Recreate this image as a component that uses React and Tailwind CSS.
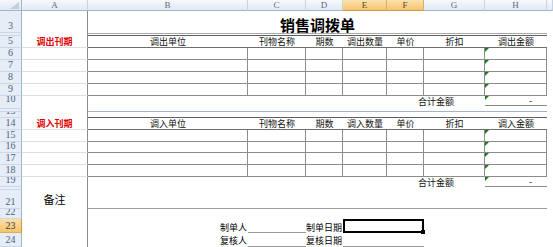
import React from "react";

// spreadsheet columns: row header, A..H, then a sliver of I
const GRID = "grid grid-cols-[22px_66px_160px_58px_37px_44px_37px_61px_62px_1fr]";
const LINE = "border-[#8c8c8c]";

const GreenTri = () => (
  <svg className="absolute left-0 top-0" width="4" height="4" viewBox="0 0 4 4">
    <polygon points="0,0 4,0 0,4" fill="#1f7a1f" />
  </svg>
);

const Row = ({ n, h, active, children }) => (
  <div className={`${GRID} ${h}`}>
    <div
      className={`flex items-end justify-center overflow-hidden border-r border-b font-['Liberation_Serif',serif] text-[10px] leading-none ${
        active
          ? "bg-linear-to-b from-[#fbe0a8] to-[#f4c46a] text-[#3a3a3a] border-r-[#c79a4a] border-b-[#dcae5f]"
          : "bg-[#e6edf6] text-[#50627f] border-r-[#9eb6ce] border-b-[#cbd7e6]"
      }`}
    >
      <span className="pb-[1px]">{n}</span>
    </div>
    {children}
  </div>
);

const ColA = ({ grid, children, className = "" }) => (
  <div
    className={`flex items-center justify-center border-r border-r-[#8c8c8c] ${
      grid ? "border-b border-b-[#dcdfe4]" : ""
    } ${className}`}
  >
    {children}
  </div>
);

const HeadRow = ({ n, label, heads }) => (
  <Row n={n} h="h-[12px]">
    <ColA grid className="text-[9px] font-bold leading-none text-[#e00000]">
      {label}
    </ColA>
    {heads.map((t) => (
      <div
        key={t}
        className="flex items-center justify-center border-b border-[#6f6f6f] text-[9px] leading-none text-[#111]"
      >
        {t}
      </div>
    ))}
    <div />
  </Row>
);

const DataRow = ({ n, h }) => (
  <Row n={n} h={h}>
    <ColA grid />
    <div className={`border-r border-b ${LINE}`} />
    <div className={`border-r border-b ${LINE}`} />
    <div className={`border-r border-b ${LINE}`} />
    <div className={`border-r border-b ${LINE}`} />
    <div className={`border-r border-b ${LINE}`} />
    <div className={`border-r border-b ${LINE}`} />
    <div className={`relative border-r border-b ${LINE}`}>
      <GreenTri />
    </div>
    <div />
  </Row>
);

const SumRow = ({ n, h }) => (
  <Row n={n} h={h}>
    <ColA />
    <div className="col-span-4" />
    <div className="col-span-2 flex items-center justify-center text-[9px] leading-none text-[#111]">
      合计金额
    </div>
    <div className={`relative flex items-center justify-end border-b ${LINE} pr-[15px] text-[9px] leading-none`}>
      <GreenTri />-
    </div>
    <div />
  </Row>
);

const EmptyRow = ({ n, h, bottom = "" }) => (
  <Row n={n} h={h}>
    <ColA />
    <div className={`col-span-7 ${bottom}`} />
    <div />
  </Row>
);

export default function App() {
  const letters = ["A", "B", "C", "D", "E", "F", "G", "H", ""];
  const outHeads = ["调出单位", "刊物名称", "期数", "调出数量", "单价", "折扣", "调出金额"];
  const inHeads = ["调入单位", "刊物名称", "期数", "调入数量", "单价", "折扣", "调入金额"];

  return (
    <div className="h-[247px] w-[553px] overflow-hidden bg-white font-['Noto_Sans_CJK_SC',sans-serif] text-black">
      {/* column letters */}
      <div className={`${GRID} h-[11px]`}>
        <div className="relative border-r border-b border-[#9eb6ce] bg-linear-to-b from-[#f5f8fc] to-[#dfe7f1]">
          <svg className="absolute bottom-[1px] right-[2px]" width="9" height="7" viewBox="0 0 9 7">
            <polygon points="9,0 9,7 0,7" fill="#c2cedd" />
          </svg>
        </div>
        {letters.map((l, i) => (
          <div
            key={i}
            className={`flex items-center justify-center border-r border-b font-['Liberation_Serif',serif] text-[9px] leading-none ${
              l === "E" || l === "F"
                ? "bg-linear-to-b from-[#fbe3b0] to-[#f3c46c] text-[#5a4a2a] border-r-[#d9b36a] border-b-[#c99b4a]"
                : "bg-linear-to-b from-[#f7f9fc] to-[#e2e9f2] text-[#5b6b84] border-r-[#c6d3e3] border-b-[#9eb6ce]"
            }`}
          >
            {l}
          </div>
        ))}
      </div>

      {/* title */}
      <Row n="3" h="h-[22px]">
        <ColA />
        <div className="col-span-7 flex items-end justify-center pb-[1px]">
          <span className="text-[15px] font-bold leading-none underline decoration-1 underline-offset-[2px]">
            销售调拨单
          </span>
        </div>
        <div />
      </Row>
      <Row n="4" h="h-[3px]">
        <ColA />
        <div className="col-span-7 border-t border-t-[#a9a9a9] border-b border-b-[#5f5f5f]" />
        <div />
      </Row>

      {/* out section */}
      <HeadRow n="5" label="调出刊期" heads={outHeads} />
      <DataRow n="6" h="h-[12px]" />
      <DataRow n="7" h="h-[12px]" />
      <DataRow n="8" h="h-[12px]" />
      <DataRow n="9" h="h-[12px]" />
      <SumRow n="10" h="h-[9px]" />
      <EmptyRow n="11" h="h-[4px]" />
      <EmptyRow n="12" h="h-[3px]" bottom="border-b border-[#a7b2c6]" />
      <EmptyRow n="13" h="h-[6px]" bottom="border-b border-[#5f5f5f]" />

      {/* in section */}
      <HeadRow n="14" label="调入刊期" heads={inHeads} />
      <DataRow n="15" h="h-[12px]" />
      <DataRow n="16" h="h-[11px]" />
      <DataRow n="17" h="h-[12px]" />
      <DataRow n="18" h="h-[12px]" />
      <SumRow n="19" h="h-[10px]" />
      <EmptyRow n="20" h="h-[3px]" />

      {/* remarks */}
      <Row n="21" h="h-[19px]">
        <ColA className="text-[11px] leading-none">备注</ColA>
        <div className="col-span-7 border-b border-[#a0a0a0]" />
        <div />
      </Row>
      <EmptyRow n="22" h="h-[10px]" />

      {/* signatures */}
      <Row n="23" h="h-[14px]" active>
        <ColA />
        <div className="flex items-end justify-end pb-[1px] pr-[1px] text-[9px] leading-none">制单人</div>
        <div className="border-b border-[#9a9a9a]" />
        <div className="flex items-end pb-[1px] text-[9px] leading-none whitespace-nowrap">制单日期</div>
        <div className="relative col-span-2 border-2 border-black">
          <div className="absolute -bottom-[3px] -right-[3px] h-[4px] w-[4px] bg-black" />
        </div>
        <div />
        <div />
        <div />
      </Row>
      <Row n="24" h="h-[14px]">
        <ColA />
        <div className="flex items-center justify-end pr-[1px] text-[9px] leading-none">复核人</div>
        <div className="border-b border-[#9a9a9a]" />
        <div className="flex items-center text-[9px] leading-none whitespace-nowrap">复核日期</div>
        <div className="col-span-2 border-b border-[#9a9a9a]" />
        <div />
        <div />
        <div />
      </Row>
    </div>
  );
}
